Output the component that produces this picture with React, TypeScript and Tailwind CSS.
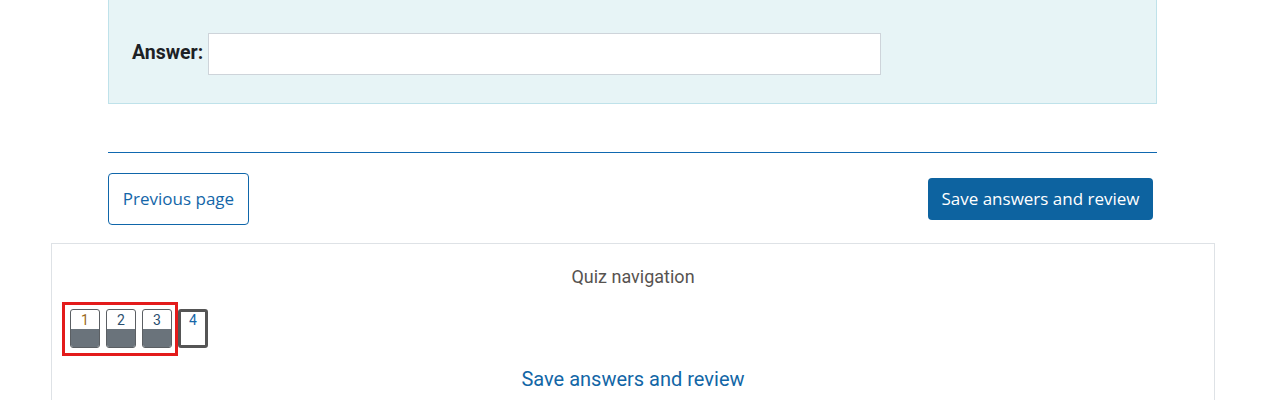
import React from "react";

function NavBtn({ n, numColor }: { n: string; numColor: string }) {
  return (
    <div className="flex h-[39px] w-[30px] flex-col overflow-hidden rounded-[3px] border border-[#5b5f63] bg-white">
      <div
        className="flex h-[19px] items-center justify-center text-[14px] leading-none"
        style={{ color: numColor, fontFamily: "Roboto, sans-serif" }}
      >
        {n}
      </div>
      <div className="flex-1 bg-[#6a737b]" />
    </div>
  );
}

export default function App() {
  return (
    <div className="relative h-[400px] w-[1263px] overflow-hidden bg-white" style={{ fontFamily: "Roboto, sans-serif" }}>
      <div className="ml-[108px] w-[1049px]">
        <div className="flex items-center border border-t-0 border-[#bfe2ea] bg-[#e7f4f6] pl-[23px] pt-[33px] pb-[28px]">
          <span className="mr-[5px] -mt-[2px] text-[19.5px] font-bold text-[#1d2125]">Answer:</span>
          <div className="h-[42px] w-[673px] border border-[#ced4da] bg-white" />
        </div>
        <div className="mt-[48px] h-px bg-[#0f68b0]" />
        <div className="mt-[20px] flex items-center justify-between pr-[4px]">
          <div
            className="flex h-[52px] w-[141px] items-center justify-center rounded-[4px] border border-[#0f66aa] text-[17px] text-[#1466a8]"
            style={{ fontFamily: "'Open Sans', sans-serif" }}
          >
            Previous page
          </div>
          <div
            className="flex h-[42px] w-[225px] items-center justify-center rounded-[4px] bg-[#0d63a0] text-[17px] text-white"
            style={{ fontFamily: "'Open Sans', sans-serif" }}
          >
            Save answers and review
          </div>
        </div>
      </div>
      <div className="ml-[51px] mt-[18px] h-[200px] w-[1164px] border border-[#dee2e6]">
        <div className="mt-[22px] text-center text-[18px] leading-[22px] text-[#575350]">Quiz navigation</div>
        <div className="mt-[14px] flex items-start pl-[10px]">
          <div className="flex gap-[6px] border-[3px] border-[#e31b1b] pl-[5px] pr-[3px] pt-[4px] pb-[5px]">
            <NavBtn n="1" numColor="#9a6a20" />
            <NavBtn n="2" numColor="#2b4e6e" />
            <NavBtn n="3" numColor="#2b4e6e" />
          </div>
          <div className="mt-[7px] flex h-[39px] w-[30px] justify-center rounded-[3px] border-[3px] border-[#555] bg-white pt-[1px] text-[14px] leading-none text-[#1466a8]">
            4
          </div>
        </div>
        <div className="mt-[11px] text-center text-[20px] leading-[24px] text-[#1266a6]">Save answers and review</div>
      </div>
    </div>
  );
}
